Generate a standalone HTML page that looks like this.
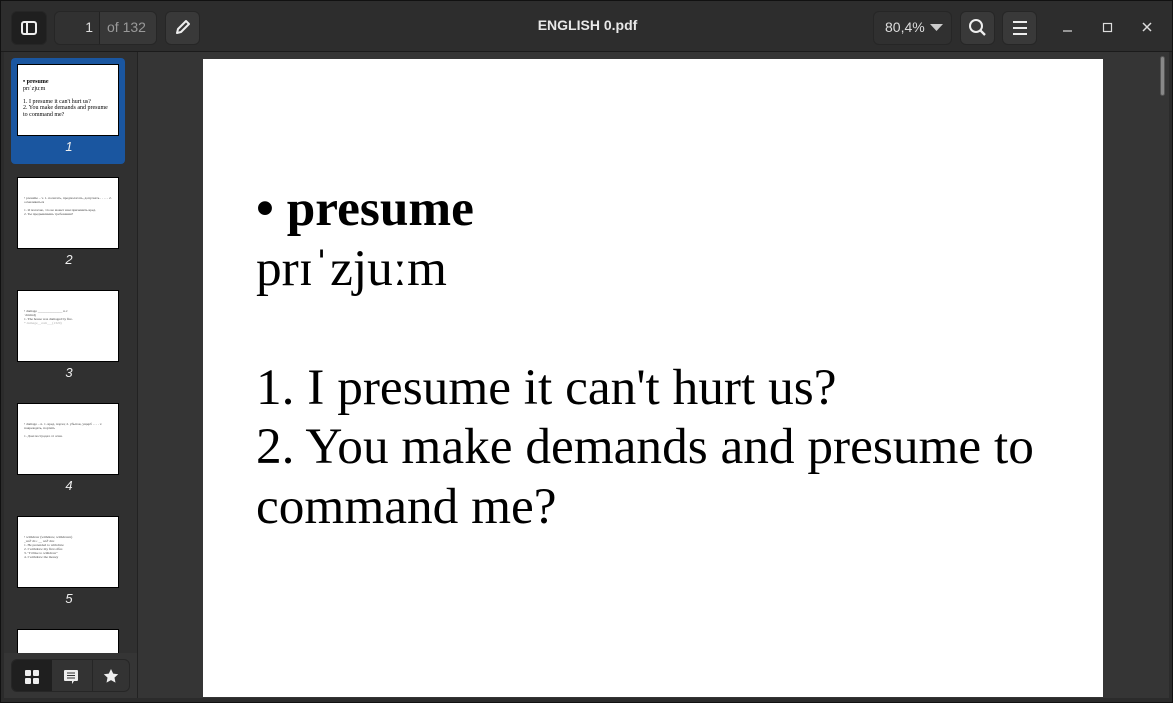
<!DOCTYPE html><html><head><style>
*{margin:0;padding:0;box-sizing:border-box}
html,body{width:1173px;height:703px;overflow:hidden}
body{background:#1e1e1e;font-family:"Liberation Sans",sans-serif;position:relative}
.win{position:absolute;left:0;top:0;width:1173px;height:703px;background:#2b2b2b;border:1px solid #111;overflow:hidden}
.hdr{position:absolute;left:0;top:0;width:1173px;height:51px;background:#2d2d2d;border-bottom:1px solid #1b1b1b}
.btn{position:absolute;top:10px;height:34px;border-radius:6px;background:#393939;border:1px solid #262626}
.side{position:absolute;left:3px;top:51px;width:134px;height:646px;background:#303030;border-right:1px solid #222;overflow:hidden}
.main{position:absolute;left:137px;top:51px;width:1031px;height:646px;background:#353535}
.page{position:absolute;left:202px;top:58px;width:900px;height:638px;background:#fff;overflow:hidden}
.pt{position:absolute;left:53px;top:120px;font-family:"Liberation Serif","DejaVu Serif",serif;font-size:51.3px;line-height:59.5px;color:#000;white-space:nowrap}
.th{position:absolute;left:13px;width:102px;height:72px;background:#fff;border:1px solid #000;font-family:"Liberation Serif",serif;color:#444;font-size:3.5px;padding:18px 6px;line-height:4px;overflow:hidden}
.lb{position:absolute;left:0;width:130px;text-align:center;color:#eee;font-size:13px;font-style:italic}
.bot{position:absolute;left:0;top:601px;width:133px;height:45px;background:#353535}
</style></head><body><div class="win">
<div class="hdr">
<div class="btn" style="left:10px;width:36px;background:#1f1f1f"><svg width="34" height="32" viewBox="0 0 34 32"><rect x="10" y="10" width="14" height="12" rx="2" fill="none" stroke="#eee" stroke-width="2"/><line x1="15" y1="10" x2="15" y2="22" stroke="#eee" stroke-width="2"/></svg></div>
<div class="btn" style="left:53px;width:103px;background:#313131;overflow:hidden"><div style="position:absolute;left:45px;top:0;width:57px;height:32px;background:#383838"></div><div style="position:absolute;left:44px;top:0;width:1px;height:32px;background:#222"></div><span style="position:absolute;left:0;width:38px;text-align:right;top:7px;color:#ddd;font-size:14px">1</span><span style="position:absolute;left:52px;top:7px;color:#999;font-size:14px">of 132</span></div>
<div class="btn" style="left:164px;width:35px"><svg width="33" height="32" viewBox="0 0 33 32"><path d="M11 21 L12 17 L20 9 L23 12 L15 20 Z" fill="none" stroke="#eee" stroke-width="2" stroke-linejoin="round"/></svg></div>
<div style="position:absolute;left:0;width:1173px;top:16px;text-align:center;color:#e8e8e8;font-size:14px;font-weight:bold">ENGLISH 0.pdf</div>
<div class="btn" style="left:872px;width:79px;background:#303030"><span style="position:absolute;left:11px;top:7px;color:#ddd;font-size:14px">80,4%</span><svg style="position:absolute;left:56px;top:12px" width="13" height="8"><path d="M0 0H13L6.5 7Z" fill="#ccc"/></svg></div>
<div class="btn" style="left:959px;width:35px"><svg width="33" height="32" viewBox="0 0 33 32"><circle cx="15" cy="14" r="6" fill="none" stroke="#eee" stroke-width="2"/><line x1="19.5" y1="18.5" x2="24" y2="23" stroke="#eee" stroke-width="2.3"/></svg></div>
<div class="btn" style="left:1001px;width:35px"><svg width="33" height="32" viewBox="0 0 33 32"><path d="M10 10H24M10 16H24M10 22H24" stroke="#eee" stroke-width="2"/></svg></div>
<svg style="position:absolute;left:1060px;top:20px" width="100" height="14"><line x1="2" y1="10" x2="11" y2="10" stroke="#ddd" stroke-width="1.2"/><rect x="42.5" y="2.5" width="8" height="8" fill="none" stroke="#ddd" stroke-width="1.2"/><path d="M82 2L90 10M90 2L82 10" stroke="#ddd" stroke-width="1.5"/></svg>
</div>
<div class="side">
<div style="position:absolute;left:7px;top:6px;width:114px;height:106px;background:#1a56a0;border-radius:4px"></div>
<div class="th" style="top:12px;padding:14px 5px;font-size:6px;line-height:6.5px;color:#000"><b>• presume</b><br>prɪˈzjuːm<br><br>1. I presume it can't hurt us?<br>2. You make demands and presume to command me?</div>
<div class="lb" style="top:87px">1</div>
<div class="th" style="top:125px">• presume – v. 1. полагать, предполагать, допускать . . . . . 2. осмеливаться<br><br>1. Я полагаю, это не может нам причинить вред.<br>2. Ты предъявляешь требования?</div>
<div class="lb" style="top:200px">2</div>
<div class="th" style="top:238px">• damage ______________ n.v<br>ˈdæmɪʤ<br>1. The house was damaged by fire.<br><span style="color:#aaa">* damage__com___(1320)</span></div>
<div class="lb" style="top:313px">3</div>
<div class="th" style="top:351px">• damage – n. 1. вред, порча; 2. убыток, ущерб . . . . v. повреждать, портить<br><br>1. Дом пострадал от огня.</div>
<div class="lb" style="top:426px">4</div>
<div class="th" style="top:464px">• withdraw (withdrew, withdrawn)<br>_wıðˈdrɔː __ wıðˈdruː<br>1. He pretended to withdraw<br>2. I withdrew my first offer.<br>3. "I'd like to withdraw"<br>4. I withdrew the money</div>
<div class="lb" style="top:539px">5</div>
<div class="th" style="top:577px;height:30px"></div>
<div class="bot"><div style="position:absolute;left:7px;top:6px;width:119px;height:33px;background:#333;border-radius:6px;border:1px solid #262626;overflow:hidden">
<div style="position:absolute;left:0;top:0;width:40px;height:33px;background:#1f1f1f"></div>
<div style="position:absolute;left:80px;top:0;width:1px;height:33px;background:#262626"></div>
<svg style="position:absolute;left:0;top:0" width="120" height="33"><g fill="#eee"><rect x="13" y="10" width="6" height="6" rx="1"/><rect x="21" y="10" width="6" height="6" rx="1"/><rect x="13" y="18" width="6" height="6" rx="1"/><rect x="21" y="18" width="6" height="6" rx="1"/><path d="M53 10h12a1 1 0 0 1 1 1v9a1 1 0 0 1-1 1h-3l-2 3v-3h-7a1 1 0 0 1-1-1v-9a1 1 0 0 1 1-1z"/><path d="M99 9l2.2 4.6 5 .6-3.7 3.4 1 5-4.5-2.5-4.5 2.5 1-5-3.7-3.4 5-.6z"/></g><path d="M55 13h8M55 15.5h8M55 18h8" stroke="#333" stroke-width="1"/></svg>
</div></div>
</div>
<div class="main"><div style="position:absolute;right:4px;top:4px;width:5px;height:40px;background:#888;border-radius:3px;border:1px solid #555"></div></div>
<div class="page"><div class="pt"><b>• presume</b><br>prɪˈzjuːm<br><br>1. I presume it can't hurt us?<br>2. You make demands and presume to<br>command me?</div></div>
</div></body></html>
